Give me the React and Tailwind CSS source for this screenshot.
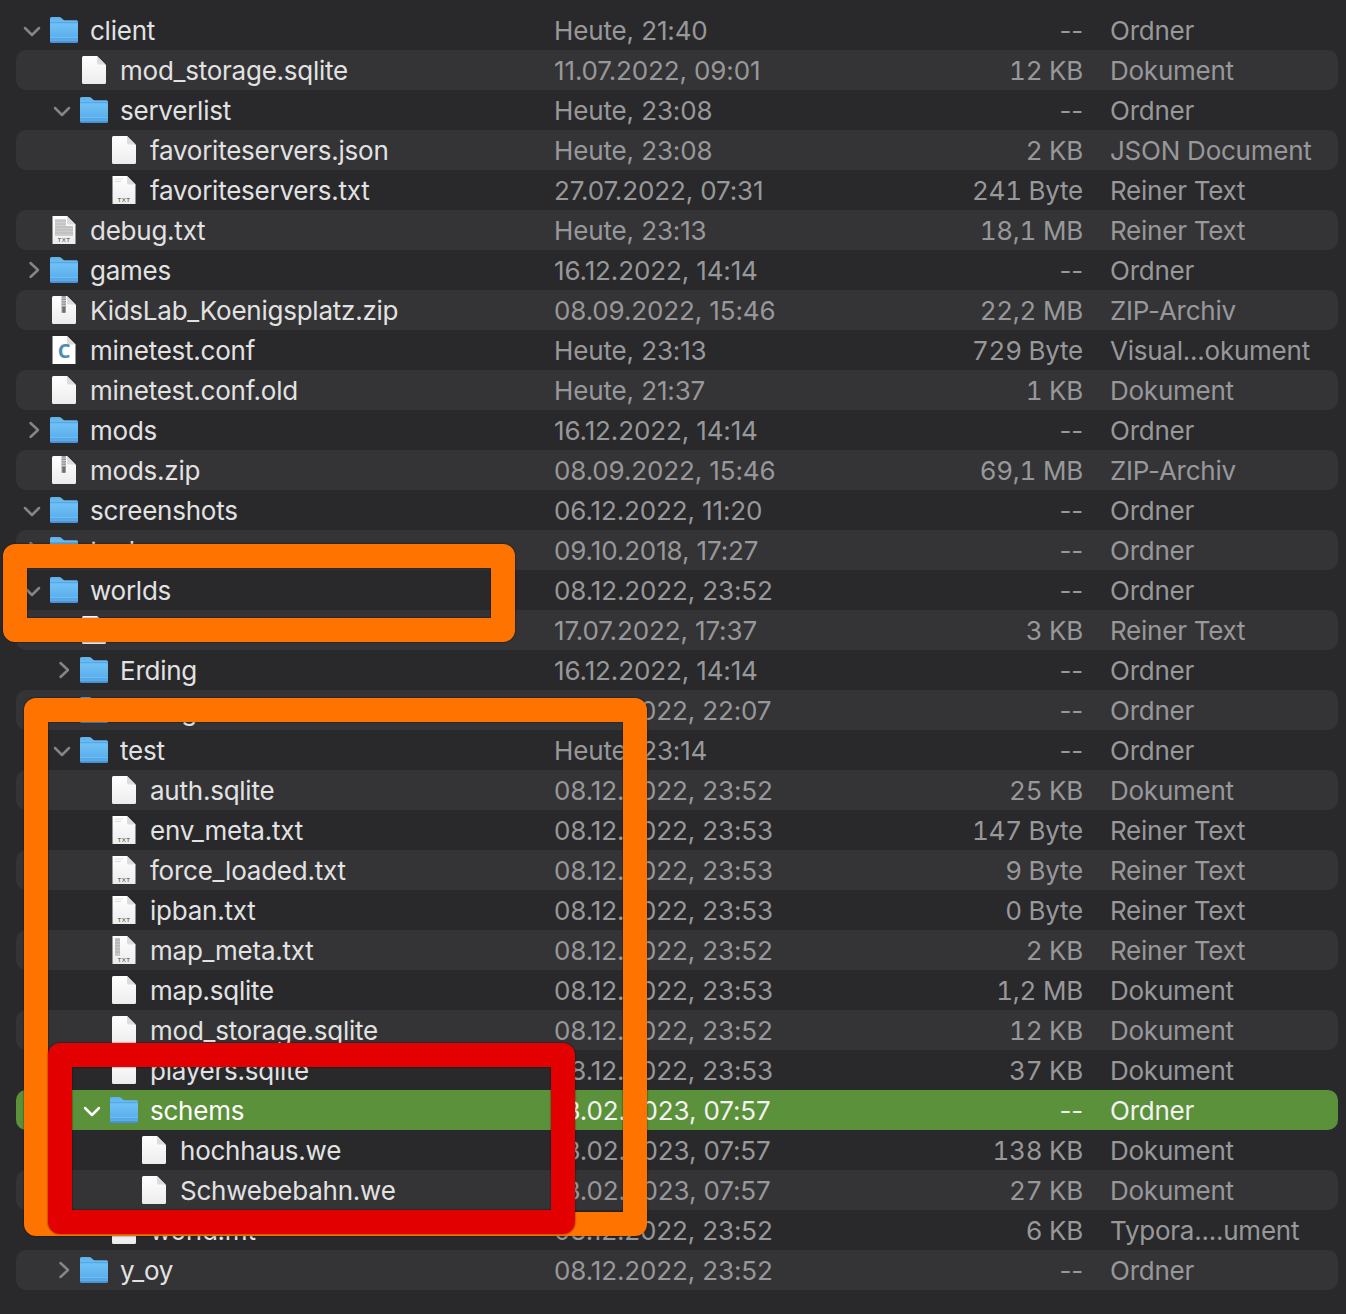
const rows = [
  [0, "d", "client", "Heute, 21:40", "--", "Ordner"],
  [1, "plain", "mod_storage.sqlite", "11.07.2022, 09:01", "12 KB", "Dokument"],
  [1, "d", "serverlist", "Heute, 23:08", "--", "Ordner"],
  [2, "plain", "favoriteservers.json", "Heute, 23:08", "2 KB", "JSON Document"],
  [2, "txt", "favoriteservers.txt", "27.07.2022, 07:31", "241 Byte", "Reiner Text"],
  [0, "dense", "debug.txt", "Heute, 23:13", "18,1 MB", "Reiner Text"],
  [0, "r", "games", "16.12.2022, 14:14", "--", "Ordner"],
  [0, "zip", "KidsLab_Koenigsplatz.zip", "08.09.2022, 15:46", "22,2 MB", "ZIP-Archiv"],
  [0, "c", "minetest.conf", "Heute, 23:13", "729 Byte", "Visual...okument"],
  [0, "plain", "minetest.conf.old", "Heute, 21:37", "1 KB", "Dokument"],
  [0, "r", "mods", "16.12.2022, 14:14", "--", "Ordner"],
  [0, "zip", "mods.zip", "08.09.2022, 15:46", "69,1 MB", "ZIP-Archiv"],
  [0, "d", "screenshots", "06.12.2022, 11:20", "--", "Ordner"],
  [0, "r", "tools", "09.10.2018, 17:27", "--", "Ordner"],
  [0, "d", "worlds", "08.12.2022, 23:52", "--", "Ordner"],
  [1, "plain", "", "17.07.2022, 17:37", "3 KB", "Reiner Text"],
  [1, "r", "Erding", "16.12.2022, 14:14", "--", "Ordner"],
  [1, "r", "Erding", "08.12.2022, 22:07", "--", "Ordner"],
  [1, "d", "test", "Heute, 23:14", "--", "Ordner"],
  [2, "plain", "auth.sqlite", "08.12.2022, 23:52", "25 KB", "Dokument"],
  [2, "txt", "env_meta.txt", "08.12.2022, 23:53", "147 Byte", "Reiner Text"],
  [2, "txt", "force_loaded.txt", "08.12.2022, 23:53", "9 Byte", "Reiner Text"],
  [2, "txt", "ipban.txt", "08.12.2022, 23:53", "0 Byte", "Reiner Text"],
  [2, "meta", "map_meta.txt", "08.12.2022, 23:52", "2 KB", "Reiner Text"],
  [2, "plain", "map.sqlite", "08.12.2022, 23:53", "1,2 MB", "Dokument"],
  [2, "plain", "mod_storage.sqlite", "08.12.2022, 23:52", "12 KB", "Dokument"],
  [2, "plain", "players.sqlite", "08.12.2022, 23:53", "37 KB", "Dokument"],
  [2, "d", "schems", "13.02.2023, 07:57", "--", "Ordner", true],
  [3, "plain", "hochhaus.we", "13.02.2023, 07:57", "138 KB", "Dokument"],
  [3, "plain", "Schwebebahn.we", "13.02.2023, 07:57", "27 KB", "Dokument"],
  [2, "plain", "world.mt", "08.12.2022, 23:52", "6 KB", "Typora....ument"],
  [1, "r", "y_oy", "08.12.2022, 23:52", "--", "Ordner"],
];

const indent = ["pl-0", "pl-[30px]", "pl-[60px]", "pl-[90px]"];

function Chevron({ open, selected }) {
  const color = selected ? "#ffffff" : "#858587";
  return (
    <svg width="20" height="20" viewBox="0 0 20 20" className="ml-[6px] shrink-0" fill="none" stroke={color} strokeWidth="2.5" strokeLinecap="round" strokeLinejoin="round">
      {open ? <path d="M3 8 L10 15 L17 8" /> : <path d="M8.5 3 L16 10 L8.5 17" />}
    </svg>
  );
}

function Folder() {
  return (
    <svg width="28" height="26" viewBox="0 0 28 26" className="shrink-0">
      <defs>
        <linearGradient id="fg" x1="0" y1="0" x2="0" y2="1">
          <stop offset="0" stopColor="#5fb2ec" />
          <stop offset="0.3" stopColor="#6ec0f5" />
          <stop offset="0.75" stopColor="#5cb0ee" />
          <stop offset="1" stopColor="#3f8fd5" />
        </linearGradient>
      </defs>
      <path d="M1.5 0 H9 Q10.5 0 11.5 1 L13 2.6 Q13.6 3.2 14.5 3.2 H26.5 Q28 3.2 28 4.7 V24.5 Q28 26 26.5 26 H1.5 Q0 26 0 24.5 V1.5 Q0 0 1.5 0 Z" fill="url(#fg)" />
      <path d="M0 5.6 H28" stroke="#4c9fe0" strokeWidth="0.8" />
      <path d="M0 20.5 H28 M0 23.2 H28" stroke="#8ccdf5" strokeWidth="0.8" opacity="0.6" />
    </svg>
  );
}

function FileIcon({ type }) {
  const sharp = type === "txt" || type === "dense" || type === "c" || type === "meta";
  return (
    <svg width="24" height="28" viewBox="0 0 24 28" className="shrink-0 ml-[2px]">
      <defs>
        <linearGradient id="pg" x1="0" y1="0" x2="0" y2="1">
          <stop offset="0" stopColor="#ffffff" />
          <stop offset="1" stopColor="#ececec" />
        </linearGradient>
      </defs>
      {sharp ? (
        <path d="M0.5 0 H15 L23.5 8.5 V28 H0.5 Z" fill={type === "c" ? "#ffffff" : "url(#pg)"} />
      ) : (
        <path d="M1.5 0 H15 L24 9 V26.5 Q24 28 22.5 28 H1.5 Q0 28 0 26.5 V1.5 Q0 0 1.5 0 Z" fill="url(#pg)" />
      )}
      <path d="M15 0 V7 Q15 8.5 16.5 8.5 H23.5 Z" fill="#dcdcdc" />
      {type === "zip" && (
        <g>
          <rect x="9.5" y="0" width="4.5" height="17" rx="1" fill="#9b9b9d" />
          <path d="M9.5 2 H14 M9.5 4.5 H14 M9.5 7 H14 M9.5 9.5 H14" stroke="#d6d6d6" strokeWidth="0.8" />
          <rect x="10.5" y="11" width="2.5" height="5.5" fill="#6f6f71" />
        </g>
      )}
      {type === "txt" && (
        <g>
          <path d="M3 3 H11 M3 5.5 H9" stroke="#d4d4d4" strokeWidth="0.8" />
          <text x="12" y="26" textAnchor="middle" fontSize="6.2" fontFamily="Liberation Sans, sans-serif" letterSpacing="0.5" fill="#444446">TXT</text>
        </g>
      )}
      {type === "dense" && (
        <g>
          <rect x="3" y="3" width="11" height="7" fill="#d2d2d2" />
          <rect x="3" y="10" width="18" height="10" fill="#cdcdcd" />
          <path d="M3 5 H14 M3 8 H14 M3 11 H21 M3 14 H21 M3 17 H21" stroke="#b4b4b4" strokeWidth="0.9" />
          <text x="12" y="26" textAnchor="middle" fontSize="6.2" fontFamily="Liberation Sans, sans-serif" letterSpacing="0.5" fill="#444446">TXT</text>
        </g>
      )}
      {type === "meta" && (
        <g>
          <rect x="3" y="2" width="5" height="18" fill="#c6c6c6" />
          <path d="M3 4 H8 M3 7 H8 M3 10 H8 M3 13 H8 M3 16 H8" stroke="#a8a8a8" strokeWidth="0.9" />
          <text x="12" y="26" textAnchor="middle" fontSize="6.2" fontFamily="Liberation Sans, sans-serif" letterSpacing="0.5" fill="#444446">TXT</text>
        </g>
      )}
      {type === "c" && (
        <text x="12" y="22" textAnchor="middle" fontSize="20" fontWeight="700" fontFamily="Open Sans, sans-serif" fill="#4f8bb1">C</text>
      )}
    </svg>
  );
}

function Row({ row, index }) {
  const [level, type, name, date, size, kind, selected] = row;
  const isFolder = type === "d" || type === "r";
  const bg = selected ? "bg-[#5a913a]" : index % 2 === 1 ? "bg-[#343436]" : "";
  const muted = selected ? "text-[#f2f2f2]" : "text-[#98989a]";
  return (
    <div className={`flex h-10 items-center rounded-[10px] text-[26px] leading-10 whitespace-nowrap ${bg}`}>
      <div className={`flex w-[538px] shrink-0 items-center ${indent[level]}`}>
        <div className="flex w-[34px] shrink-0 items-center">
          {isFolder && <Chevron open={type === "d"} selected={selected} />}
        </div>
        <div className="flex w-[28px] shrink-0 items-center">
          {isFolder ? <Folder /> : <FileIcon type={type} />}
        </div>
        <span className={`ml-3 pt-[2px] ${selected ? "text-white" : "text-[#e2e2e3]"}`}>{name}</span>
      </div>
      <div className={`w-[341px] shrink-0 pt-[2px] tracking-[-0.005em] ${muted}`}>{date}</div>
      <div className={`w-[188px] shrink-0 pt-[2px] text-right ${size === "--" ? "" : "tabular-nums"} ${muted}`}>{size}</div>
      <div className={`ml-[27px] pt-[2px] ${muted}`}>{kind}</div>
    </div>
  );
}

export default function App() {
  return (
    <div className="relative h-[1314px] w-[1346px] overflow-hidden bg-[#29292b] pl-4 pr-2 pt-[10px] font-['Inter',sans-serif] tracking-[-0.015em] antialiased">
      {rows.map((r, i) => (
        <Row key={i} row={r} index={i} />
      ))}
      <div className="absolute left-[3px] top-[544px] h-[98px] w-[512px] rounded-xl border-[24px] border-[#ff7300] shadow-[0_0_2px_rgba(0,0,0,0.7),inset_0_0_2px_rgba(0,0,0,0.7)]" />
      <div className="absolute left-[24px] top-[698px] h-[538px] w-[623px] rounded-xl border-[24px] border-[#ff7300] shadow-[0_0_2px_rgba(0,0,0,0.7),inset_0_0_2px_rgba(0,0,0,0.7)]" />
      <div className="absolute left-[48px] top-[1043px] h-[191px] w-[527px] rounded-xl border-[24px] border-[#e30000] shadow-[0_0_2px_rgba(0,0,0,0.7),inset_0_0_2px_rgba(0,0,0,0.7)]" />
    </div>
  );
}
